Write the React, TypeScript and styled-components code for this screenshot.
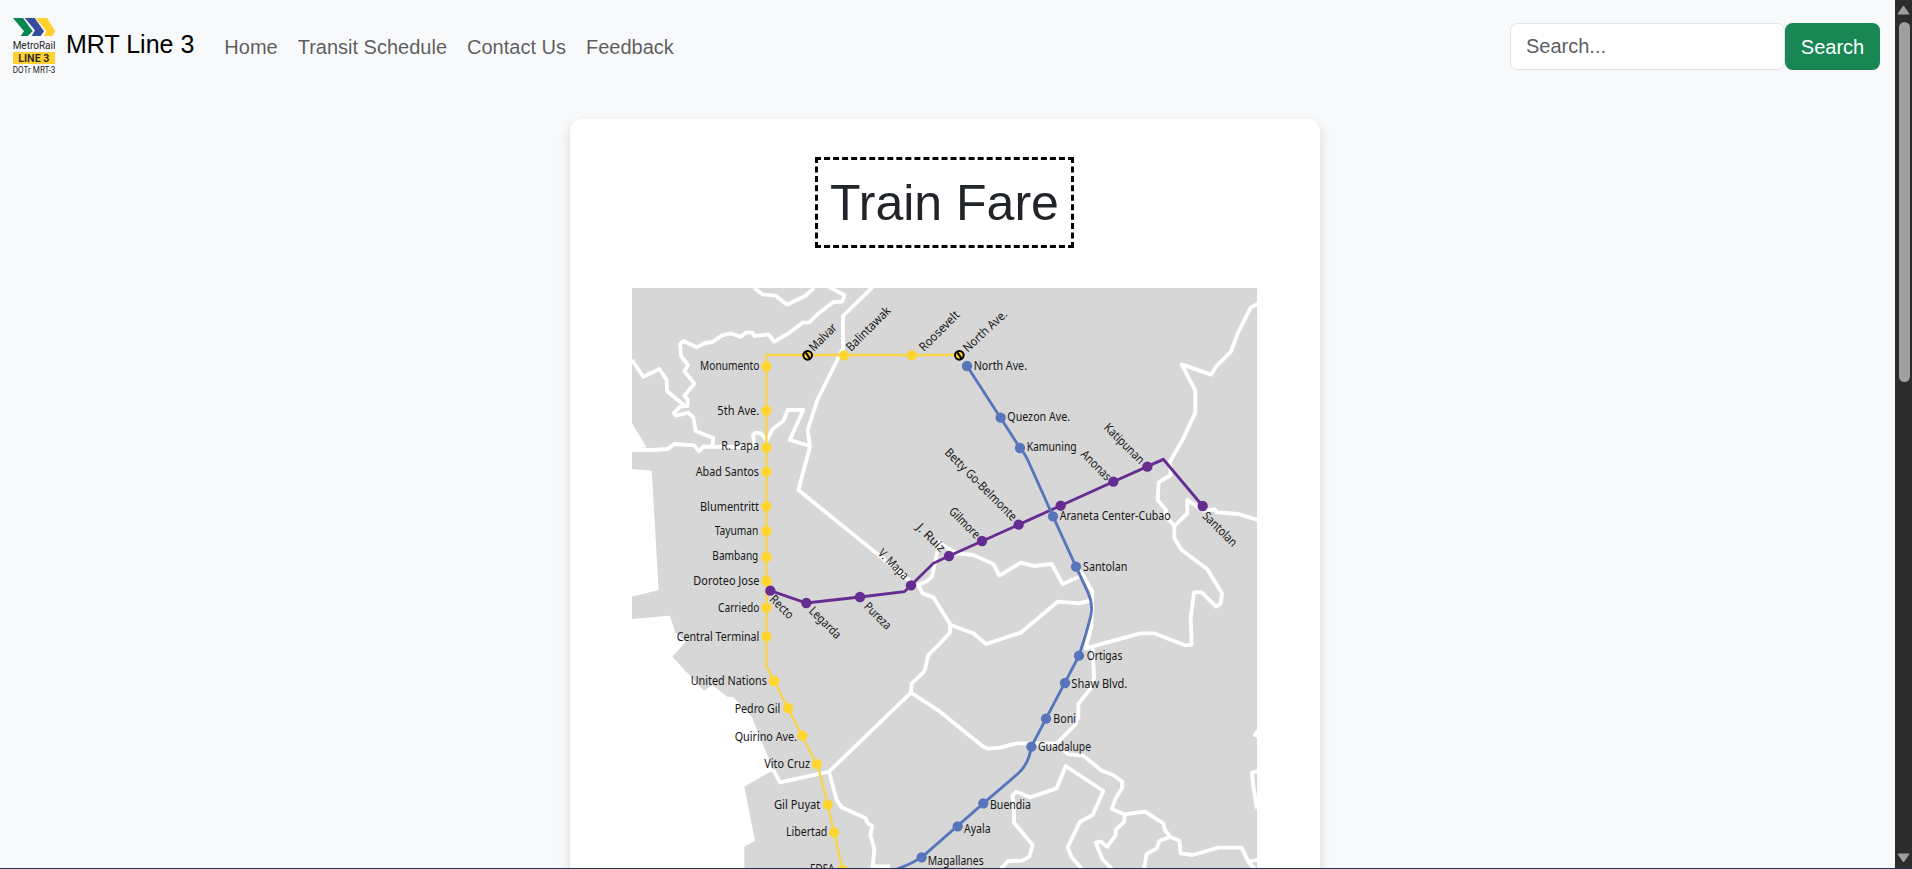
import React from 'react';
import styled, { createGlobalStyle } from 'styled-components';

const GlobalStyle = createGlobalStyle`
  *, *::before, *::after { box-sizing: border-box; }
  body {
    margin: 0;
    background: #f8f9fb;
    color: #212529;
    font-family: "Liberation Sans", Arial, sans-serif;
    font-size: 20px;
    line-height: 1.5;
    overflow: hidden;
  }
`;

const Window = styled.div`
  display: grid;
  grid-template-columns: 1fr 17px;
  grid-template-rows: 868px 1px;
  width: 100%;
  height: 869px;
`;

const Page = styled.div`
  display: flex;
  flex-direction: column;
  min-width: 0;
  overflow: hidden;
`;

const Navbar = styled.header`
  display: flex;
  align-items: center;
  flex: none;
  height: 93px;
  padding: 0 15px 0 12px;
`;

const Brand = styled.a`
  display: flex;
  align-items: center;
  gap: 10px;
  color: #000;
  font-size: 25px;
  text-decoration: none;
  white-space: nowrap;
`;

const Logo = styled.svg`
  flex: none;
  width: 44px;
  height: 58px;
  margin-bottom: 2px;
`;

const BrandName = styled.span`
  margin-top: -4px;
`;

const NavLinks = styled.nav`
  display: flex;
  margin-left: 20px;
`;

const NavLink = styled.a`
  padding: 10px;
  color: rgba(0, 0, 0, 0.65);
  text-decoration: none;
  white-space: nowrap;
`;

const SearchForm = styled.form`
  display: flex;
  margin-left: auto;
`;

const SearchInput = styled.input`
  width: 275px;
  height: 47px;
  padding: 0 15px;
  border: 1px solid #dee2e6;
  border-radius: 7.5px;
  background: #fff;
  color: #212529;
  font: inherit;
  &::placeholder {
    color: rgba(33, 37, 41, 0.75);
    opacity: 1;
  }
`;

const SearchButton = styled.button`
  width: 95px;
  height: 47px;
  padding: 0;
  border: 0;
  border-radius: 7.5px;
  background: #198754;
  color: #fff;
  font: inherit;
`;

const Main = styled.main`
  display: flex;
  justify-content: center;
  padding: 26px 5px 0 0;
`;

const Card = styled.section`
  display: flex;
  flex-direction: column;
  align-items: center;
  flex: none;
  width: 750px;
  padding: 38px 1px 38px 0;
  border-radius: 12.5px;
  background: #fff;
  box-shadow: 0 5px 12px rgba(0, 0, 0, 0.14);
`;

const Title = styled.h1`
  width: 259px;
  margin: 0 0 40px;
  padding: 12.5px 0;
  border: 3px dashed #000;
  font-size: 50px;
  font-weight: 500;
  line-height: 60px;
  text-align: center;
  white-space: nowrap;
`;

const MapDrawing = styled.svg`
  display: block;
  flex: none;
  width: 625px;
  height: 580px;
`;

const MapLabel = styled.text`
  font-family: "Noto Sans", sans-serif;
  font-size: 36.5px;
  fill: #161616;
`;

const Scrollbar = styled.div`
  display: flex;
  flex-direction: column;
  align-items: center;
  background: #2c2c2c;
`;

const ScrollArrow = styled.svg`
  flex: none;
  width: 13px;
  height: 10px;
  margin: 5px 0;
`;

const ScrollTrack = styled.div`
  flex: 1;
  padding: 2px 0 0 1px;
`;

const ScrollThumb = styled.div`
  width: 11px;
  height: 360px;
  border-radius: 6px;
  background: #9f9f9f;
`;

const BottomEdge = styled.div`
  grid-column: 1 / -1;
  background: #28304f;
`;

const BrandLogo = () => (
  <Logo viewBox="36 36 132 174">
    <path d="M39 39H69L98 79L83 93H62L72 79Z" fill="#078650" />
    <path d="M74 39H104L132 79L122 93H95L105 76Z" fill="#364c9f" />
    <path d="M107 39H141L166 79L157 93H131L139 79Z" fill="#ffd02e" />
    <rect x="39" y="141" width="126" height="36" fill="#ffd02e" />
    <g fontFamily="Roboto, sans-serif" fill="#26262a">
      <text x="38" y="131" fontSize="33" textLength="128" lengthAdjust="spacingAndGlyphs">MetroRail</text>
      <text x="55" y="170" fontSize="32" fontWeight="600" textLength="93" lengthAdjust="spacingAndGlyphs">LINE 3</text>
      <text x="38" y="205" fontSize="26" textLength="128" lengthAdjust="spacingAndGlyphs">DOTr MRT-3</text>
    </g>
  </Logo>
);

const LAND =
  'M0 0H1875V1740H337V1676L369 1658L337 1496L424 1446L359 1286L304 1228L286 1226L241 1191L216 1208L121 1106L161 1061L129 1031L114 983L0 993V926L80 906L59 548L0 543V482L44 478L0 406Z';

const BOUNDARIES = [
  '0,216 34,266 82,243 104,276 105,309 159,354',
  '367,0 391,19 431,23 465,50 519,24 546,0',
  '589,-4 637,21 631,41 604,42 554,81 532,103 512,104 474,133 427,161 409,139 367,144 361,134 341,134 326,146 295,136 269,143 241,162 219,165 194,178 154,159 144,169 147,204 168,231 157,250 187,287 157,323 167,334 166,354 144,356 126,375 132,383 169,374 184,388 191,429 244,450 241,474',
  '0,486 59,486 107,483 127,468 187,472 201,490 214,476 369,477 363,441 371,434 387,436 404,458 422,423 454,399 467,366 514,366 473,456 534,474',
  '721,-2 633,84 633,181 556,336 527,426 534,476 499,606 739,800 837,882',
  '924,756 914,800 900,866 884,880 859,891 872,916 904,928 956,1011 1024,1036 1062,1068 1166,1034 1277,941 1342,946 1374,938',
  '954,1011 954,1034 924,1066 889,1101 877,1151 839,1186 837,1214 591,1451',
  '837,1214 924,1271 1054,1376 1069,1382 1104,1379 1154,1366 1274,1366 1329,1311 1339,1286 1339,1248 1376,1201 1386,1171 1382,1081',
  '424,1446 444,1483 591,1451 614,1536 629,1558 701,1591 707,1606 721,1614 715,1641 727,1684 721,1745',
  '721,1735 774,1735',
  '924,766 974,796 1024,801 1084,828 1102,863 1166,824 1206,834 1259,828 1292,888 1342,866',
  '1332,836 1356,866 1381,911 1378,1016 1361,1081 1524,1036 1566,1036 1659,1072 1679,1070 1676,991 1686,913 1709,913 1752,956 1766,946 1770,916 1726,844 1649,786 1627,751 1627,714 1599,681 1602,666 1577,636 1580,583 1616,561 1614,521 1654,451 1690,374 1690,308 1649,229 1737,260 1752,236 1797,191 1817,136 1856,59 1877,47',
  '1627,714 1666,676 1666,636 1714,668 1749,664 1754,673 1819,678 1877,696',
  '1294,1386 1309,1399 1354,1403 1409,1448 1444,1461 1471,1481 1470,1501 1451,1531 1439,1563 1477,1579 1539,1571 1594,1606 1599,1626 1614,1646 1642,1658 1646,1696 1681,1701 1759,1679 1829,1679 1849,1721 1870,1745',
  '1849,1721 1877,1716',
  '1477,1579 1477,1601 1451,1626 1451,1641 1426,1676 1407,1661 1391,1664 1411,1713 1439,1742',
  '1614,1646 1582,1659 1574,1681 1544,1698 1536,1742',
  '1349,1742 1319,1708 1307,1678 1344,1601 1382,1581 1414,1509 1301,1434 1274,1501 1194,1528 1152,1511 1141,1524 1146,1546 1146,1604 1202,1671 1192,1706 1171,1718 1129,1719 1107,1742',
  '1877,1449 1860,1454 1864,1496 1875,1562',
  '1877,1328 1869,1341 1877,1344',
];

type Dot = [number, number];

const YELLOW_STOPS: Dot[] = [
  [403, 235], [403, 368], [403, 479], [403, 551], [403, 655], [403, 729], [403, 807],
  [403, 879], [403, 959], [403, 1045], [426, 1179], [468, 1260], [511, 1343],
  [554, 1428], [587, 1550], [606, 1633], [632, 1746], [636, 202], [839, 202],
];
const CLOSED_STOPS: Dot[] = [[527, 202], [982, 202]];
const PURPLE_STOPS: Dot[] = [
  [415, 908], [523, 945], [684, 927], [837, 892], [951, 804], [1050, 759],
  [1160, 710], [1286, 653], [1444, 581], [1546, 536], [1712, 654],
];
const BLUE_STOPS: Dot[] = [
  [1005, 234], [1106, 389], [1164, 480], [1263, 685], [1332, 836], [1341, 1103],
  [1299, 1185], [1242, 1292], [1198, 1376], [1054, 1546], [977, 1615], [869, 1708],
];

// name, left x, baseline y, drawn width, rotation in degrees
type Label = [string, number, number, number, number?];

const LABELS: Label[] = [
  ['Monumento', 204, 246, 178],
  ['5th Ave.', 256, 381, 126],
  ['R. Papa', 268, 487, 113],
  ['Abad Santos', 191, 563, 190],
  ['Blumentritt', 204, 670, 177],
  ['Tayuman', 248, 742, 131],
  ['Bambang', 241, 816, 138],
  ['Doroteo Jose', 184, 891, 198],
  ['Carriedo', 258, 972, 124],
  ['Central Terminal', 134, 1059, 248],
  ['United Nations', 176, 1192, 229],
  ['Pedro Gil', 308, 1275, 137],
  ['Quirino Ave.', 308, 1358, 187],
  ['Vito Cruz', 397, 1441, 137],
  ['Gil Puyat', 426, 1562, 139],
  ['Libertad', 462, 1644, 124],
  ['EDSA', 534, 1756, 73],
  ['North Ave.', 1025, 246, 160],
  ['Quezon Ave.', 1126, 400, 188],
  ['Kamuning', 1184, 489, 150],
  ['Araneta Center-Cubao', 1283, 695, 333],
  ['Santolan', 1353, 848, 133],
  ['Ortigas', 1364, 1117, 107],
  ['Shaw Blvd.', 1318, 1199, 168],
  ['Boni', 1264, 1305, 68],
  ['Guadalupe', 1218, 1389, 159],
  ['Buendia', 1074, 1563, 123],
  ['Ayala', 996, 1634, 80],
  ['Magallanes', 887, 1731, 168],
  ['Malvar', 546, 192, 100, -45],
  ['Balintawak', 657, 192, 172, -45],
  ['Roosevelt', 876, 192, 154, -45],
  ['North Ave.', 1007, 194, 165, -43],
  ['Katipunan', 1414, 421, 154, 45],
  ['Anonas', 1344, 501, 112, 45],
  ['Betty Go-Belmonte', 936, 496, 289, 45],
  ['Gilmore', 949, 673, 114, 45],
  ['J. Ruiz', 851, 721, 105, 45],
  ['V. Mapa', 736, 798, 112, 45],
  ['Recto', 411, 936, 84, 45],
  ['Legarda', 529, 971, 119, 45],
  ['Pureza', 694, 958, 98, 45],
  ['Santolan', 1709, 686, 130, 45],
];

const Stops = ({ dots, color }: { dots: Dot[]; color: string }) => (
  <g fill={color}>
    {dots.map(([x, y]) => (
      <circle key={`${x}-${y}`} cx={x} cy={y} r="15.5" />
    ))}
  </g>
);

const RailMap = () => (
  <MapDrawing viewBox="0 0 1875 1740">
    <path d={LAND} fill="#d7d7d7" />
    <g fill="none" stroke="#fff" strokeWidth="11.5" strokeLinejoin="round">
      {BOUNDARIES.map((points) => (
        <polyline key={points} points={points} />
      ))}
    </g>
    <path
      d="M982 201H403V1134L426 1179L554 1428L562 1450L587 1550L606 1633L632 1746"
      fill="none"
      stroke="#f8d548"
      strokeWidth="7"
    />
    <Stops dots={YELLOW_STOPS} color="#ffd52e" />
    {CLOSED_STOPS.map(([x, y]) => (
      <g key={x} stroke="#000" strokeWidth="6">
        <circle cx={x} cy={y} r="13" fill="#ffd52e" />
        <path d={`M${x - 6} ${y - 9}L${x + 6} ${y + 9}`} />
      </g>
    ))}
    <path
      d="M415 908L523 945L684 927L817 911L837 892L904 826L951 804L1160 710L1444 581L1594 514L1712 654"
      fill="none"
      stroke="#662d91"
      strokeWidth="8.5"
    />
    <Stops dots={PURPLE_STOPS} color="#662d91" />
    <path
      d="M1005 234L1164 480Q1176 492 1190 522L1263 685L1332 836L1368 914Q1384 948 1376 985L1362 1036L1341 1103L1198 1376Q1190 1428 1160 1455L1054 1546L869 1708Q830 1732 790 1745"
      fill="none"
      stroke="#5775bb"
      strokeWidth="8.5"
    />
    <Stops dots={BLUE_STOPS} color="#5775bb" />
    {LABELS.map(([name, x, y, width, angle = 0]) => (
      <MapLabel
        key={`${name}-${x}`}
        x={x}
        y={y}
        textLength={width}
        lengthAdjust="spacingAndGlyphs"
        transform={angle ? `rotate(${angle} ${x} ${y})` : undefined}
      >
        {name}
      </MapLabel>
    ))}
  </MapDrawing>
);

export default function App() {
  return (
    <>
      <GlobalStyle />
      <Window>
        <Page>
          <Navbar>
            <Brand>
              <BrandLogo />
              <BrandName>MRT Line 3</BrandName>
            </Brand>
            <NavLinks>
              <NavLink>Home</NavLink>
              <NavLink>Transit Schedule</NavLink>
              <NavLink>Contact Us</NavLink>
              <NavLink>Feedback</NavLink>
            </NavLinks>
            <SearchForm>
              <SearchInput placeholder="Search..." />
              <SearchButton type="button">Search</SearchButton>
            </SearchForm>
          </Navbar>
          <Main>
            <Card>
              <Title>Train Fare</Title>
              <RailMap />
            </Card>
          </Main>
        </Page>
        <Scrollbar>
          <ScrollArrow viewBox="0 0 13 10">
            <path d="M6.5 1L12 9H1Z" fill="#9f9f9f" stroke="#9f9f9f" strokeLinejoin="round" />
          </ScrollArrow>
          <ScrollTrack>
            <ScrollThumb />
          </ScrollTrack>
          <ScrollArrow viewBox="0 0 13 10">
            <path d="M6.5 9L1 1H12Z" fill="#9f9f9f" stroke="#9f9f9f" strokeLinejoin="round" />
          </ScrollArrow>
        </Scrollbar>
        <BottomEdge />
      </Window>
    </>
  );
}
